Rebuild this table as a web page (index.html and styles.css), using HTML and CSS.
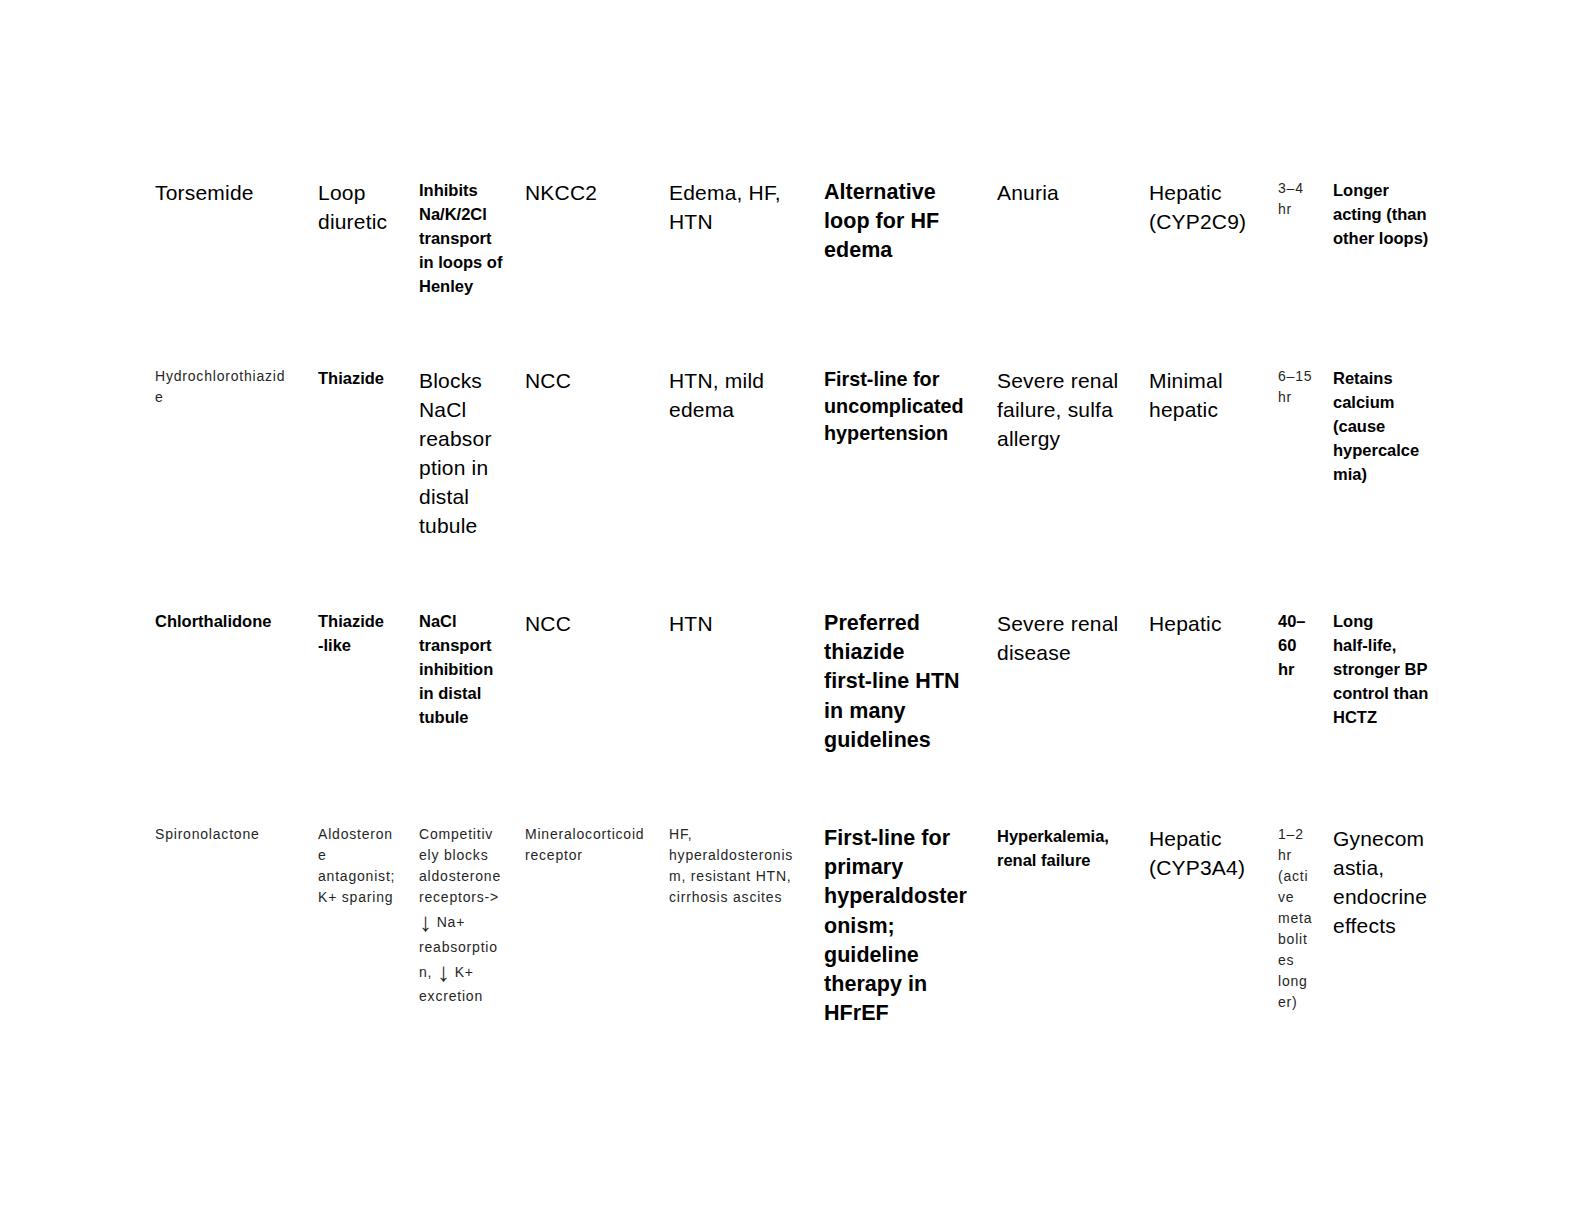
FILE: index.html
```html
<!DOCTYPE html>
<html lang="en">
<head>
<meta charset="utf-8">
<title>Diuretics</title>
<link rel="stylesheet" href="styles.css">
</head>
<body>
<table class="drugs">
  <colgroup>
    <col class="c1"><col class="c2"><col class="c3"><col class="c4"><col class="c5">
    <col class="c6"><col class="c7"><col class="c8"><col class="c9"><col class="c10">
  </colgroup>
  <tbody>
    <tr class="r1">
      <td class="L">Torsemide</td>
      <td class="L">Loop<br>diuretic</td>
      <td class="MB">Inhibits<br>Na/K/2Cl<br>transport<br>in loops of<br>Henley</td>
      <td class="L">NKCC2</td>
      <td class="L">Edema, HF,<br>HTN</td>
      <td class="LB">Alternative<br>loop for HF<br>edema</td>
      <td class="L">Anuria</td>
      <td class="L">Hepatic<br>(CYP2C9)</td>
      <td class="S">3–4<br>hr</td>
      <td class="MB">Longer<br>acting (than<br>other loops)</td>
    </tr>
    <tr class="r2">
      <td class="S">Hydrochlorothiazid<br>e</td>
      <td class="MB">Thiazide</td>
      <td class="L">Blocks<br>NaCl<br>reabsor<br>ption in<br>distal<br>tubule</td>
      <td class="L">NCC</td>
      <td class="L">HTN, mild<br>edema</td>
      <td class="MLB">First-line for<br>uncomplicated<br>hypertension</td>
      <td class="L">Severe renal<br>failure, sulfa<br>allergy</td>
      <td class="L">Minimal<br>hepatic</td>
      <td class="S">6–15<br>hr</td>
      <td class="MB">Retains<br>calcium<br>(cause<br>hypercalce<br>mia)</td>
    </tr>
    <tr class="r3">
      <td class="MB">Chlorthalidone</td>
      <td class="MB">Thiazide<br>-like</td>
      <td class="MB">NaCl<br>transport<br>inhibition<br>in distal<br>tubule</td>
      <td class="L">NCC</td>
      <td class="L">HTN</td>
      <td class="LB">Preferred<br>thiazide<br>first-line HTN<br>in many<br>guidelines</td>
      <td class="L">Severe renal<br>disease</td>
      <td class="L">Hepatic</td>
      <td class="MB">40–<br>60<br>hr</td>
      <td class="MB">Long<br>half-life,<br>stronger BP<br>control than<br>HCTZ</td>
    </tr>
    <tr class="r4">
      <td class="S">Spironolactone</td>
      <td class="S">Aldosteron<br>e<br>antagonist;<br>K+ sparing</td>
      <td class="S">Competitiv<br>ely blocks<br>aldosterone<br>receptors-&gt;<br><span class="arr">↓</span> Na+<br>reabsorptio<br>n, <span class="arr">↓</span> K+<br>excretion</td>
      <td class="S">Mineralocorticoid<br>receptor</td>
      <td class="S">HF,<br>hyperaldosteronis<br>m, resistant HTN,<br>cirrhosis ascites</td>
      <td class="LB">First-line for<br>primary<br>hyperaldoster<br>onism;<br>guideline<br>therapy in<br>HFrEF</td>
      <td class="MB">Hyperkalemia,<br>renal failure</td>
      <td class="L">Hepatic<br>(CYP3A4)</td>
      <td class="S">1–2<br>hr<br>(acti<br>ve<br>meta<br>bolit<br>es<br>long<br>er)</td>
      <td class="L">Gynecom<br>astia,<br>endocrine<br>effects</td>
    </tr>
  </tbody>
</table>
</body>
</html>
```

FILE: styles.css
```css
html, body {
  margin: 0;
  padding: 0;
  background: #ffffff;
}

body {
  font-family: "Liberation Sans", Arial, sans-serif;
  color: #000000;
}

.drugs {
  margin: 178px 0 0 155px;
  border-collapse: collapse;
  border-spacing: 0;
  table-layout: fixed;
  width: 1293px;
}

.c1 { width: 163px; }
.c2 { width: 101px; }
.c3 { width: 106px; }
.c4 { width: 144px; }
.c5 { width: 155px; }
.c6 { width: 173px; }
.c7 { width: 152px; }
.c8 { width: 129px; }
.c9 { width: 55px; }
.c10 { width: 115px; }

.drugs td {
  padding: 0;
  vertical-align: top;
  white-space: nowrap;
  text-align: left;
}

.r1 td { height: 188px; }
.r2 td { height: 243px; }
.r3 td { height: 215px; }
.r4 td { height: 220px; }

/* large regular */
.L {
  font-size: 21px;
  line-height: 29px;
  letter-spacing: 0.2px;
  font-weight: 400;
}

/* large bold */
.LB {
  font-size: 21.5px;
  line-height: 29.2px;
  font-weight: 700;
  letter-spacing: 0.05px;
}

/* medium-large bold */
.MLB {
  font-size: 19.8px;
  line-height: 26.8px;
  font-weight: 700;
}

/* medium bold */
.MB {
  font-size: 16.5px;
  line-height: 24px;
  font-weight: 700;
}

/* small light */
.S {
  font-size: 14px;
  line-height: 21px;
  letter-spacing: 0.8px;
  font-weight: 400;
  color: #262626;
}

.arr {
  font-size: 26px;
  line-height: 28.5px;
  letter-spacing: 0;
  vertical-align: -3.6px;
}
```
